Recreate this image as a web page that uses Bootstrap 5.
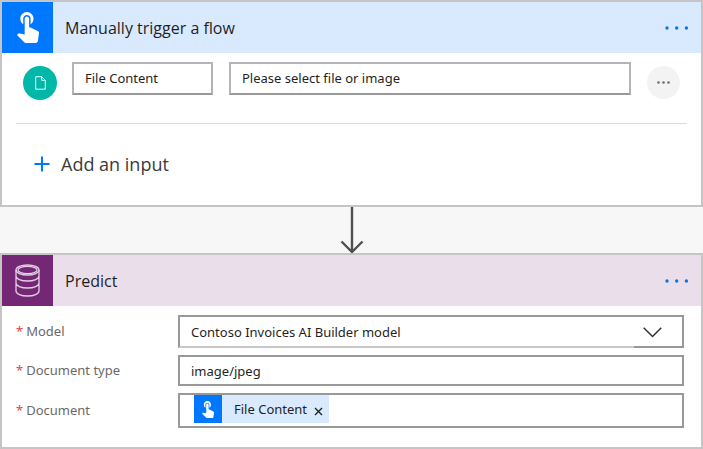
<!DOCTYPE html>
<html lang="en">
<head>
<meta charset="utf-8">
<meta name="viewport" content="width=device-width, initial-scale=1">
<title>Flow designer</title>
<link href="https://cdn.jsdelivr.net/npm/bootstrap@5.3.0/dist/css/bootstrap.min.css" rel="stylesheet">
<style>
  body { background: #f7f7f7; font-family: "Noto Sans", "Open Sans", sans-serif; font-size: 13px; line-height: 20px; color: #1f1f1f; }
  .step { border: 2px solid #c6c4c4; border-radius: 0; color: inherit; }
  .step-head { height: 51px; }
  .step-icon { width: 51px; flex: none; }
  .step-title { font-family: "Open Sans", sans-serif; font-size: 16px; line-height: 24px; padding-left: 12px; font-weight: 400; }
  .head-trigger { background: #d9eaff; }
  .head-predict { background: #ebdeeb; }
  .bg-touch { background: #0077ff; }
  .bg-data { background: #742774; }
  .step-more { padding: 0 12px; line-height: 0; }
  .input-row { padding: 9px 21px 23px 21px; }
  .file-dot { width: 34px; height: 34px; background: #00b7a8; flex: none; }
  .row-more { width: 33px; height: 33px; background: #f3f3f3; flex: none; }
  .field { border: 2px solid #999; border-radius: 0; padding: 0 11px; background: #fff; color: #1f1f1f; font-size: 13px; line-height: 20px; width: 100%; }
  .field::placeholder { color: #1f1f1f; opacity: 1; }
  .input-row .field { height: 33px; border-color: #b4b4b4; border-bottom-color: #999; padding-bottom: 2px; }
  .input-row .name-field { width: 141px; margin-left: 15px; flex: none; }
  .input-row .value-field { margin: 0 16px; min-width: 0; }
  .rule { margin: 0 14px; border-top: 1px solid #dcdcdc; }
  .add-btn { font-family: "Open Sans", sans-serif; font-size: 18px; line-height: 24px; color: #3b3b3b; margin: 28px 0 29px 32px; gap: 11px; }
  .connector { height: 46px; }
  .params { padding: 9px 17px 19px 14px; gap: 7px; }
  .param-label { width: 162px; flex: none; color: #6b6966; line-height: 20px; padding-bottom: 1px; }
  .star { color: #e8433f; margin-right: 3px; }
  .model-field { height: 33px; appearance: none; border-bottom-color: #c8c8c8; }
  .drop { right: 0; bottom: 0; width: 50px; height: 33px; border-bottom: 2px solid #999; padding: 12px 0 0 9px; pointer-events: none; line-height: 0; }
  .type-field { height: 31px; }
  .doc-field { height: 35px; padding: 0 14px; }
  .token { background: #d9eaff; height: 28px; }
  .token-icon { width: 28px; height: 28px; flex: none; }
  .token-close { padding: 4px 6px 0 7px; line-height: 0; }
</style>
<script src="https://cdn.jsdelivr.net/npm/bootstrap@5.3.0/dist/js/bootstrap.bundle.min.js"></script>
</head>
<body>
<svg class="d-none" aria-hidden="true">
  <symbol id="touch" viewBox="4.75 3 15 21">
    <path fill="#fff" d="M9 11.24V7.5C9 6.12 10.12 5 11.5 5S14 6.12 14 7.5v3.74c1.21-.81 2-2.18 2-3.74C16 5.01 13.99 3 11.5 3S7 5.01 7 7.5c0 1.56.79 2.93 2 3.74zm9.84 4.63l-4.54-2.26c-.17-.07-.35-.11-.54-.11H13v-6c0-.83-.67-1.5-1.5-1.5S10 6.67 10 7.5v10.74l-3.43-.72c-.08-.01-.15-.03-.24-.03-.31 0-.59.13-.79.33l-.79.8 4.94 4.94c.27.27.65.44 1.06.44h6.79c.75 0 1.33-.55 1.44-1.28l.75-5.27c.01-.07.02-.14.02-.2 0-.62-.38-1.16-.91-1.38z"/>
  </symbol>
  <symbol id="dots" viewBox="0 0 24 4">
    <g fill="#0f75dc"><circle cx="2" cy="2" r="1.7"/><circle cx="11.7" cy="2" r="1.7"/><circle cx="21.4" cy="2" r="1.7"/></g>
  </symbol>
</svg>

<main>
  <section class="card step">
    <div class="step-head head-trigger d-flex align-items-stretch">
      <div class="step-icon bg-touch d-flex align-items-center justify-content-center">
        <svg width="22" height="31" aria-hidden="true"><use href="#touch"/></svg>
      </div>
      <h2 class="step-title my-auto me-auto">Manually trigger a flow</h2>
      <button type="button" class="step-more border-0 bg-transparent" aria-label="Trigger menu">
        <svg width="24" height="4"><use href="#dots"/></svg>
      </button>
    </div>
    <div class="input-row d-flex align-items-start">
      <span class="file-dot rounded-circle d-flex align-items-center justify-content-center mt-1">
        <svg width="11" height="14" viewBox="0 0 11 14" fill="none" stroke="#e6fffc" aria-hidden="true"><path d="M.7.7h6l3.6 3.6v8.9H.7zM6.7.7v3.6h3.6"/></svg>
      </span>
      <input class="field name-field" type="text" value="File Content" aria-label="Input name">
      <input class="field value-field" type="text" placeholder="Please select file or image" aria-label="Input description">
      <button type="button" class="row-more rounded-circle border-0 p-0 d-flex align-items-center justify-content-center mt-1" aria-label="Input menu">
        <svg width="13" height="3" viewBox="0 0 13 3" fill="#6e6e6e"><circle cx="1.5" cy="1.5" r="1.3"/><circle cx="6.5" cy="1.5" r="1.3"/><circle cx="11.5" cy="1.5" r="1.3"/></svg>
      </button>
    </div>
    <div class="rule"></div>
    <button type="button" class="add-btn align-self-start border-0 bg-transparent p-0 d-flex align-items-center">
      <svg width="16" height="16" viewBox="0 0 16 16" stroke="#0077ff" stroke-width="2" aria-hidden="true"><path d="M8 .5v15M.5 8h15"/></svg>
      Add an input
    </button>
  </section>

  <div class="connector d-flex justify-content-center">
    <svg width="24" height="46" viewBox="0 0 24 46" fill="none" stroke="#505050" stroke-width="2.4" aria-hidden="true"><path d="M12 0v45M1.5 34.5 12 45l10.5-10.5"/></svg>
  </div>

  <section class="card step">
    <div class="step-head head-predict d-flex align-items-stretch">
      <div class="step-icon bg-data d-flex align-items-center justify-content-center">
        <svg width="25" height="33" viewBox="0 0 25 33" fill="none" stroke="#e3cfe3" stroke-width="1.3" aria-hidden="true">
          <ellipse cx="12.5" cy="6" rx="11.5" ry="5"/><ellipse cx="12.5" cy="6" rx="9.5" ry="3.6"/>
          <path d="M1 6v21c0 2.800 5.100 5 11.500 5S24 29.800 24 27V6M1 12c0 2.800 5.100 5 11.500 5S24 14.800 24 12M1 19c0 2.800 5.100 5 11.500 5S24 21.800 24 19"/>
        </svg>
      </div>
      <h2 class="step-title my-auto me-auto">Predict</h2>
      <button type="button" class="step-more border-0 bg-transparent" aria-label="Predict menu">
        <svg width="24" height="4"><use href="#dots"/></svg>
      </button>
    </div>
    <div class="params d-flex flex-column">
      <div class="d-flex align-items-center">
        <label class="param-label" for="model"><span class="star">*</span>Model</label>
        <div class="position-relative flex-fill d-flex">
          <select id="model" class="field model-field"><option>Contoso Invoices AI Builder model</option></select>
          <span class="drop position-absolute">
            <svg width="19" height="11" viewBox="0 0 19 11" fill="none" stroke="#333" stroke-width="1.5" aria-hidden="true"><path d="M.7.7l8.800 8.800L18.300.7"/></svg>
          </span>
        </div>
      </div>
      <div class="d-flex align-items-center">
        <label class="param-label" for="doctype"><span class="star">*</span>Document type</label>
        <input id="doctype" class="field type-field" type="text" value="image/jpeg">
      </div>
      <div class="d-flex align-items-center">
        <span class="param-label" id="doc-label"><span class="star">*</span>Document</span>
        <div class="field doc-field d-flex align-items-start" role="group" aria-labelledby="doc-label">
          <span class="token d-inline-flex align-items-center">
            <span class="token-icon bg-touch d-flex align-items-center justify-content-center"><svg width="12" height="17" aria-hidden="true"><use href="#touch"/></svg></span>
            <span class="ps-2 ms-1">File Content</span>
            <button type="button" class="token-close border-0 bg-transparent" aria-label="Remove File Content">
              <svg width="9" height="9" viewBox="0 0 9 9" stroke="#222" stroke-width="1.4"><path d="M1 1l7 7M8 1L1 8"/></svg>
            </button>
          </span>
        </div>
      </div>
    </div>
  </section>
</main>
</body>
</html>
